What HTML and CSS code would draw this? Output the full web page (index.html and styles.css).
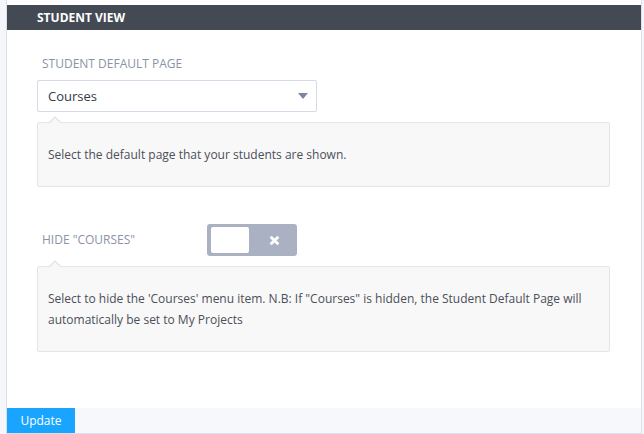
FILE: index.html
```html
<!DOCTYPE html>
<html>
<head>
<meta charset="utf-8">
<link rel="stylesheet" href="styles.css">
</head>
<body>
<div class="panel">
  <div class="panel-header">STUDENT VIEW</div>
  <div class="panel-body">
    <div class="field">
      <div class="field-label">STUDENT DEFAULT PAGE</div>
      <div class="select">
        <span class="select-value">Courses</span>
        <span class="select-arrow"></span>
      </div>
      <div class="help">Select the default page that your students are shown.</div>
    </div>
    <div class="field field-toggle">
      <div class="toggle-row">
        <div class="field-label inline">HIDE "COURSES"</div>
        <div class="toggle">
          <span class="knob"></span>
          <span class="toggle-x">
            <svg width="11" height="11" viewBox="0 0 10 10"><path d="M1.5 1.5 L8.5 8.5 M8.5 1.5 L1.5 8.5" stroke="#fff" stroke-width="2.6" stroke-linecap="butt"/></svg>
          </span>
        </div>
      </div>
      <div class="help">Select to hide the 'Courses' menu item. N.B: If "Courses" is hidden, the Student Default Page will automatically be set to My Projects</div>
    </div>
  </div>
  <div class="panel-footer">
    <button class="btn-update">Update</button>
  </div>
</div>
</body>
</html>
```

FILE: styles.css
```css
html, body {
  margin: 0;
  padding: 0;
}
body {
  background: #f5f6fa;
  font-family: "Open Sans", "Liberation Sans", sans-serif;
  width: 644px;
  height: 434px;
  overflow: hidden;
}
.panel {
  margin-left: 6px;
  width: 636px;
  height: 434px;
  background: #fff;
  border-left: 1px solid #dde0ea;
  border-right: 1px solid #dde0ea;
  border-bottom: 1px solid #dde0ea;
  padding-top: 5px;
  box-sizing: border-box;
  display: flex;
  flex-direction: column;
}
.panel-header {
  height: 25px;
  background: #434a54;
  color: #fff;
  font-weight: 700;
  font-size: 12px;
  line-height: 25px;
  padding-left: 30px;
}
.panel-body {
  flex: 1;
  padding: 26px 0 0 30px;
}
.field-label {
  color: #8a93a7;
  font-size: 12px;
  line-height: 16px;
  padding-left: 5px;
  margin-bottom: 8px;
}
.select {
  width: 280px;
  height: 32px;
  box-sizing: border-box;
  border: 1px solid #d6d9e6;
  border-radius: 2px;
  display: flex;
  align-items: center;
  justify-content: space-between;
  padding: 0 8px 0 10px;
  font-size: 13px;
  color: #333a45;
}
.select-arrow {
  width: 0;
  height: 0;
  border-left: 5px solid transparent;
  border-right: 5px solid transparent;
  border-top: 6px solid #7c86a0;
}
.help {
  position: relative;
  margin-top: 10px;
  width: 573px;
  box-sizing: border-box;
  background: #f8f8f9;
  border: 1px solid #e4e5ea;
  border-radius: 2px;
  padding: 21px 10px;
  font-size: 12px;
  line-height: 21px;
  color: #4b4f58;
}
.help::before {
  content: "";
  position: absolute;
  left: 11px;
  top: -7px;
  width: 0;
  height: 0;
  border-left: 6px solid transparent;
  border-right: 6px solid transparent;
  border-bottom: 6px solid #e4e5ea;
}
.help::after {
  content: "";
  position: absolute;
  left: 12px;
  top: -5px;
  width: 0;
  height: 0;
  border-left: 5px solid transparent;
  border-right: 5px solid transparent;
  border-bottom: 5px solid #f8f8f9;
}
.field-toggle {
  margin-top: 37px;
}
.toggle-row {
  display: flex;
  align-items: center;
}
.field-label.inline {
  margin: 0;
  width: 165px;
}
.toggle {
  width: 90px;
  height: 32px;
  background: #a9b1c3;
  border-radius: 3px;
  display: flex;
  align-items: center;
  padding-left: 4px;
  box-sizing: border-box;
}
.knob {
  width: 38px;
  height: 26px;
  background: #fff;
  border-radius: 2px;
}
.toggle-x {
  flex: 1;
  display: flex;
  justify-content: center;
  align-items: center;
  padding-left: 2px;
}
.toggle-x svg {
  display: block;
}
.field-toggle .help {
  margin-top: 10px;
}
.panel-footer {
  height: 25px;
  background: #f7f8fc;
  display: flex;
}
.btn-update {
  width: 68px;
  height: 25px;
  border: 0;
  margin: 0;
  padding: 0;
  background: #19a5ff;
  color: #fff;
  font-family: "Open Sans", "Liberation Sans", sans-serif;
  font-size: 12px;
}
```
